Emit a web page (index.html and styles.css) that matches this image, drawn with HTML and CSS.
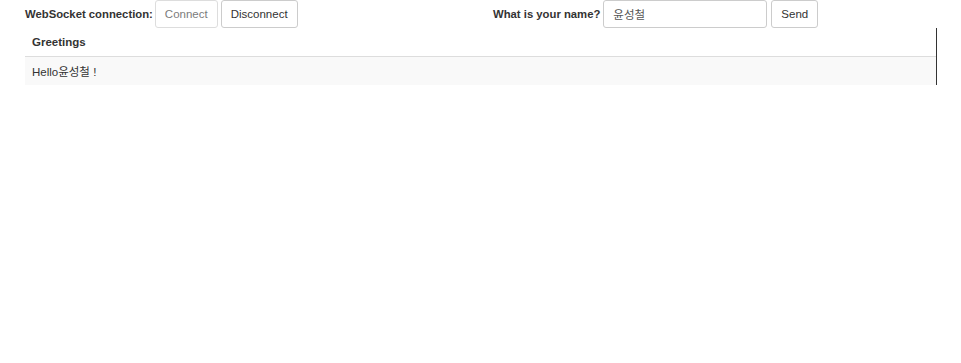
FILE: index.html
```html
<!DOCTYPE html>
<html lang="en">
<head>
    <meta charset="UTF-8">
    <title>Hello WebSocket</title>
    <link rel="stylesheet" href="styles.css">
</head>
<body>
    <div id="main-content" class="container">
        <!-- connect / send controls -->
        <div class="row">
            <form class="form-inline">
                <label for="connect">WebSocket connection:</label>
                <button id="connect" class="btn" type="button" disabled>Connect</button>
                <button id="disconnect" class="btn" type="button">Disconnect</button>
            </form>
            <form class="form-inline">
                <label for="name">What is your name?</label>
                <input type="text" id="name" class="form-control" value="윤성철">
                <button id="send" class="btn" type="button">Send</button>
            </form>
        </div>

        <!-- greetings -->
        <div class="table-wrap">
            <table id="conversation" class="table">
                <thead>
                    <tr><th>Greetings</th></tr>
                </thead>
                <tbody id="greetings">
                    <tr><td>Hello윤성철 !</td></tr>
                </tbody>
            </table>
        </div>
    </div>
</body>
</html>
```

FILE: styles.css
```css
body {
    margin: 0;
    font-family: "Liberation Sans", Arial, "Noto Sans CJK KR", sans-serif;
    font-size: 11.5px;
    color: #333;
    background: #fff;
}

.container {
    padding-left: 25px;
    width: 912px;
}

.row {
    display: grid;
    grid-template-columns: 468px 1fr;
}

.form-inline {
    display: flex;
    align-items: center;
    gap: 3px;
    margin: 0;
    height: 28px;
}

.form-inline + .form-inline {
    gap: 4px;
}

label {
    font-weight: bold;
    font-size: 11.3px;
    color: #333;
    margin-right: -1px;
}

.btn {
    height: 28px;
    padding: 0 9px;
    font-family: inherit;
    font-size: 11.5px;
    color: #333;
    background: #fff;
    border: 1px solid #ccc;
    border-radius: 3px;
    cursor: pointer;
}

.btn:disabled {
    opacity: 0.65;
    cursor: not-allowed;
}

.form-control {
    box-sizing: border-box;
    width: 164px;
    height: 28px;
    padding: 0 9px;
    font-family: "Liberation Sans", Arial, "Noto Sans CJK KR", sans-serif;
    font-size: 11.5px;
    color: #555;
    border: 1px solid #ccc;
    border-radius: 3px;
}

.table-wrap {
    border-right: 1px solid #333;
    width: 911px;
}

.table {
    width: 100%;
    border-collapse: collapse;
}

.table th {
    text-align: left;
    height: 28px;
    padding: 0 7px;
    border-bottom: 1px solid #ddd;
}

.table td {
    height: 28px;
    padding: 0 7px;
    background: #f9f9f9;
}
```
